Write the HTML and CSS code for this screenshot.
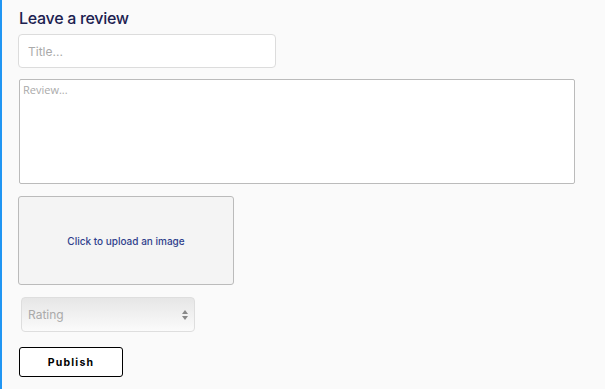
FILE: index.html
```html
<!DOCTYPE html>
<html lang="en">
<head>
    <meta charset="UTF-8">
    <meta name="viewport" content="width=device-width, initial-scale=1.0">
    <title>Leave a review</title>
    <link rel="stylesheet" href="styles.css">
</head>
<body>
    <div class="review-form">
        <h2>Leave a review</h2>
        <input class="title-input" type="text" placeholder="Title...">
        <textarea class="review-text" placeholder="Review..."></textarea>

        <!-- Area per caricare l'immagine -->
        <div class="upload">Click to upload an image</div>

        <div class="rating">
            <span>Rating</span>
            <span class="arrows">
                <svg width="6" height="10" viewBox="0 0 6 10"><path d="M3 0L6 4H0z" fill="#888"/><path d="M3 10L0 6H6z" fill="#888"/></svg>
            </span>
        </div>

        <button class="publish">Publish</button>
    </div>
</body>
</html>
```

FILE: styles.css
```css
body {
    margin: 0;
    padding: 0;
    background-color: #fafafa;
    font-family: Inter, "Noto Sans", sans-serif;
    height: 100vh;
    border-left: 2px solid #2196f3;
    box-sizing: border-box;
}
.review-form {
    padding: 8px 0 0 16px;
    display: flex;
    flex-direction: column;
    align-items: flex-start;
}
h2 {
    font-size: 16px;
    font-weight: 500;
    letter-spacing: -0.3px;
    color: #1c2150;
    margin: 0 0 6px 1px;
    line-height: 20px;
}
.title-input {
    width: 258px;
    height: 34px;
    box-sizing: border-box;
    border: 1px solid #dcdcdc;
    border-radius: 4px;
    background: #fff;
    padding: 0 9px;
    font-family: Inter, sans-serif;
    font-size: 12px;
    margin: 0 0 11px 0;
    outline: none;
}
.title-input::placeholder {
    color: #aaa;
}
.review-text {
    width: 556px;
    height: 105px;
    box-sizing: border-box;
    border: 1px solid #bbb;
    border-radius: 2px;
    background: #fff;
    padding: 2px 3px;
    font-family: "Open Sans", sans-serif;
    font-size: 11px;
    resize: none;
    margin: 0 0 12px 1px;
    outline: none;
}
.review-text::placeholder {
    color: #aaa;
}
.upload {
    width: 216px;
    height: 89px;
    box-sizing: border-box;
    border: 1px solid #bbb;
    border-radius: 3px;
    background: #f4f4f4;
    display: flex;
    justify-content: center;
    align-items: center;
    font-size: 10px;
    font-weight: 500;
    color: #2f3f8c;
    margin-bottom: 12px;
}
.rating {
    width: 174px;
    height: 35px;
    box-sizing: border-box;
    margin-left: 3px;
    border: 1px solid #dedede;
    border-radius: 4px;
    background: linear-gradient(#e6e6e6, #fbfbfb);
    display: flex;
    justify-content: space-between;
    align-items: center;
    padding: 0 6px 0 6px;
    font-size: 12px;
    color: #aaa;
    margin-bottom: 15px;
}
.arrows {
    display: flex;
}
.publish {
    width: 104px;
    height: 30px;
    margin-left: 1px;
    padding-top: 2px;
    border: 1px solid #000;
    border-radius: 3px;
    background: #fff;
    font-family: Inter, sans-serif;
    font-size: 10.5px;
    font-weight: 700;
    letter-spacing: 1.2px;
    color: #000;
    cursor: pointer;
}
```
